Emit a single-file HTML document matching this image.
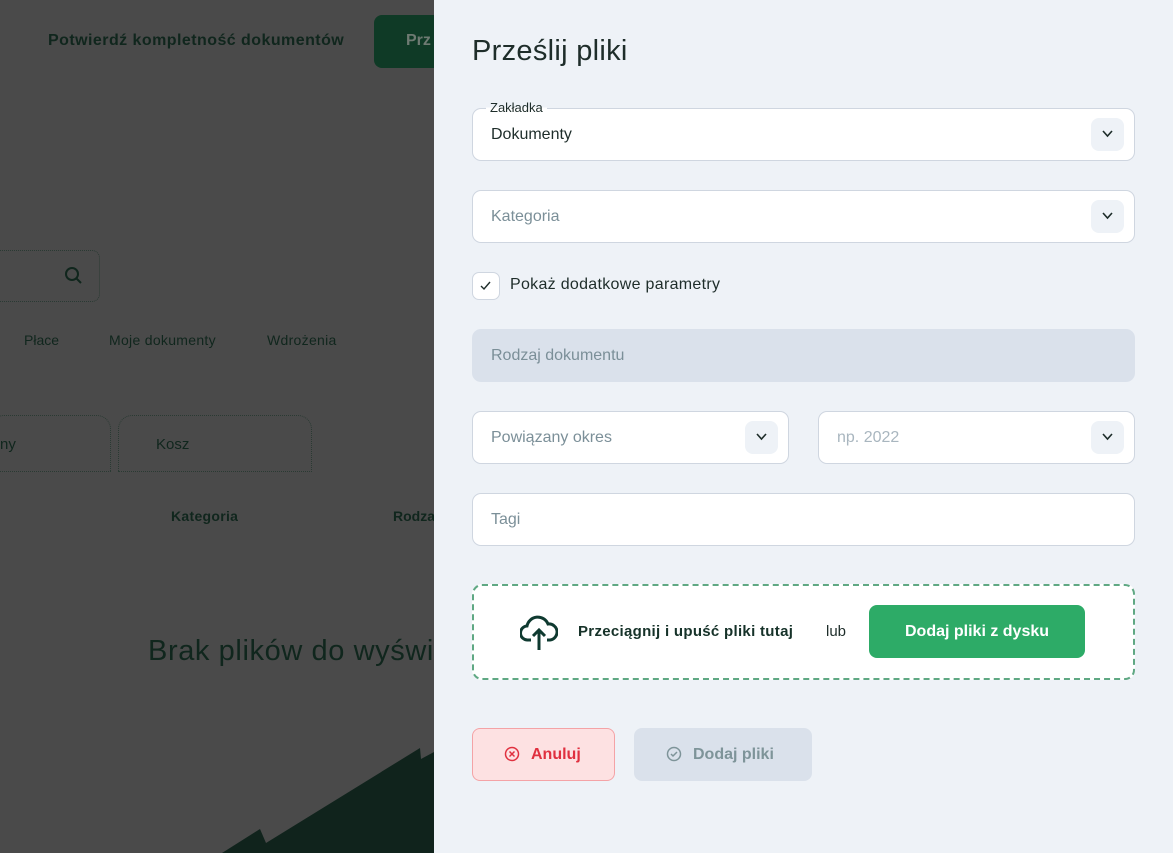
<!DOCTYPE html>
<html><head><meta charset="utf-8"><style>
*{box-sizing:border-box;margin:0;padding:0}
body{width:1173px;height:853px;position:relative;overflow:hidden;background:#4a4a4a;font-family:"Liberation Sans",sans-serif;}
.l{position:absolute;color:#10261d}
.panel{position:absolute;left:434px;top:0;width:739px;height:853px;background:#eef2f7}
.f{position:absolute;left:38px;width:663px;height:53px;background:#fff;border:1px solid #cfd6e0;border-radius:9px;font-size:16px;color:#7b8f98;padding-left:18px;line-height:51px}
.chev{position:absolute;right:10px;top:9px;width:33px;height:33px;background:#eef2f7;border-radius:8px}
.chev svg{position:absolute;left:10px;top:11px}
</style></head><body>
<div class="l" style="left:48px;top:32px;font-size:16px;font-weight:bold;letter-spacing:0.45px">Potwierdź kompletność dokumentów</div>
<div style="position:absolute;left:374px;top:15px;width:70px;height:53px;background:#0f3a26;border-radius:8px"></div>
<div class="l" style="left:406px;top:32px;font-size:16px;font-weight:bold;color:#6e7a72">Prz</div>
<div style="position:absolute;left:-10px;top:250px;width:110px;height:52px;border:1px dotted #2a3a33;border-radius:8px"></div>
<svg style="position:absolute;left:64px;top:266px" width="18" height="18"><circle cx="8" cy="8" r="6" fill="none" stroke="#10261d" stroke-width="2"/><line x1="12" y1="12" x2="17" y2="17" stroke="#10261d" stroke-width="2"/></svg>
<div class="l" style="left:24px;top:332px;font-size:14px">Płace</div>
<div class="l" style="left:109px;top:332px;font-size:14px;letter-spacing:0.3px">Moje dokumenty</div>
<div class="l" style="left:267px;top:332px;font-size:14px;letter-spacing:0.3px">Wdrożenia</div>
<div style="position:absolute;left:-10px;top:415px;width:121px;height:57px;border:1px dotted #2a3a33;border-radius:14px 14px 0 0"></div>
<div style="position:absolute;left:118px;top:415px;width:194px;height:57px;border:1px dotted #2a3a33;border-radius:14px 14px 0 0"></div>
<div class="l" style="left:0;top:436px;font-size:15px">ny</div>
<div class="l" style="left:156px;top:436px;font-size:15px">Kosz</div>
<div class="l" style="left:171px;top:508px;font-size:14px;font-weight:bold;letter-spacing:0.3px">Kategoria</div>
<div class="l" style="left:393px;top:508px;font-size:14px;font-weight:bold">Rodzaj</div>
<div class="l" style="left:148px;top:635px;font-size:29px;letter-spacing:0.6px">Brak plików do wyświ</div>
<svg style="position:absolute;left:0;top:0" width="434" height="853"><polygon points="222,853 260,829 266,843 420,748 421,759 434,752 434,853" fill="#10231c"/></svg>
<div class="panel">
<div style="position:absolute;left:38px;top:35px;font-size:29px;color:#1e2d2a;letter-spacing:0.3px">Prześlij pliki</div>
<div class="f" style="top:108px;color:#1e2d2a">Dokumenty<div class="chev"><svg width="13" height="10"><path d="M2 2l4.5 5 4.5-5" fill="none" stroke="#1e2d2a" stroke-width="1.6"/></svg></div></div>
<div style="position:absolute;left:52px;top:100px;font-size:13px;color:#1e2d2a;background:linear-gradient(#eef2f7 50%,#fff 50%);padding:0 4px">Zakładka</div>
<div class="f" style="top:190px">Kategoria<div class="chev"><svg width="13" height="10"><path d="M2 2l4.5 5 4.5-5" fill="none" stroke="#1e2d2a" stroke-width="1.6"/></svg></div></div>
<div style="position:absolute;left:38px;top:272px;width:28px;height:28px;background:#fff;border:1px solid #cfd6e0;border-radius:7px"><svg width="26" height="26"><path d="M8 13l3 3 6-7" fill="none" stroke="#1e2d2a" stroke-width="1.4"/></svg></div>
<div style="position:absolute;left:76px;top:276px;font-size:16px;color:#1e2d2a;letter-spacing:0.3px">Pokaż dodatkowe parametry</div>
<div class="f" style="top:329px;background:#dae1eb;border-color:#dae1eb">Rodzaj dokumentu</div>
<div class="f" style="top:411px;width:317px">Powiązany okres<div class="chev"><svg width="13" height="10"><path d="M2 2l4.5 5 4.5-5" fill="none" stroke="#1e2d2a" stroke-width="1.6"/></svg></div></div>
<div class="f" style="top:411px;left:384px;width:317px;color:#a9b6bf">np. 2022<div class="chev"><svg width="13" height="10"><path d="M2 2l4.5 5 4.5-5" fill="none" stroke="#1e2d2a" stroke-width="1.6"/></svg></div></div>
<div class="f" style="top:493px">Tagi</div>
<div style="position:absolute;left:38px;top:584px;width:663px;height:96px;background:#fff;border:2px dashed #5fa883;border-radius:10px"></div>
<svg style="position:absolute;left:86px;top:612px" width="38" height="40"><path d="M11 28H8a7 7 0 0 1-1-14 11 11 0 0 1 21-2 7 7 0 0 1 2 16h-3" fill="none" stroke="#0f3a30" stroke-width="3"/><path d="M19 38V19M13 24l6-6 6 6" fill="none" stroke="#0f3a30" stroke-width="3"/></svg>
<div style="position:absolute;left:144px;top:623px;font-size:15px;font-weight:bold;color:#163229;letter-spacing:0.3px">Przeciągnij i upuść pliki tutaj</div>
<div style="position:absolute;left:392px;top:623px;font-size:15px;color:#1e2d2a">lub</div>
<div style="position:absolute;left:435px;top:605px;width:216px;height:53px;background:#2dab67;border-radius:8px;color:#fff;font-size:16px;font-weight:bold;text-align:center;line-height:53px">Dodaj pliki z dysku</div>
<div style="position:absolute;left:38px;top:728px;width:143px;height:53px;background:#fde1e2;border:1px solid #f4a3a6;border-radius:8px;color:#e0303f;font-size:16px;font-weight:bold;line-height:51px;padding-left:58px">Anuluj</div>
<svg style="position:absolute;left:70px;top:746px" width="16" height="16"><circle cx="8" cy="8" r="6.5" fill="none" stroke="#e0303f" stroke-width="1.5"/><path d="M5.5 5.5l5 5M10.5 5.5l-5 5" stroke="#e0303f" stroke-width="1.5"/></svg>
<div style="position:absolute;left:200px;top:728px;width:178px;height:53px;background:#dae1eb;border-radius:8px;color:#7e9499;font-size:16px;font-weight:bold;line-height:53px;padding-left:59px">Dodaj pliki</div>
<svg style="position:absolute;left:232px;top:746px" width="16" height="16"><circle cx="8" cy="8" r="6.5" fill="none" stroke="#7e9499" stroke-width="1.5"/><path d="M5 8l2 2 4-4" fill="none" stroke="#7e9499" stroke-width="1.5"/></svg>
</div>
</body></html>
